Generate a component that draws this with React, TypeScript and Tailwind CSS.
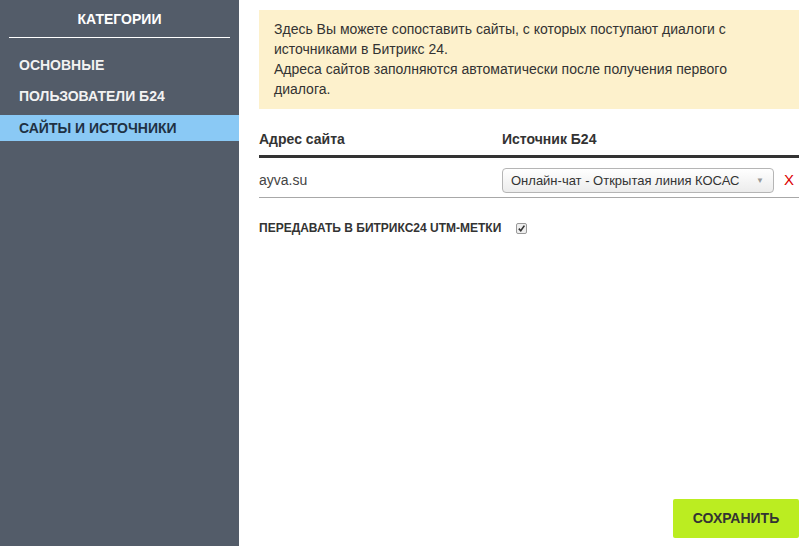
import React from "react";

const menu = [
  { name: "ОСНОВНЫЕ", active: false },
  { name: "ПОЛЬЗОВАТЕЛИ Б24", active: false },
  { name: "САЙТЫ И ИСТОЧНИКИ", active: true },
];

const rows = [{ site: "ayva.su", source: "Онлайн-чат - Открытая линия КОСАС" }];

export default function App() {
  return (
    <div className="flex h-[546px] w-full bg-white font-['Liberation_Sans',Arial,sans-serif] text-[#333]">
      {/* Sidebar */}
      <aside className="w-[239px] shrink-0 bg-[#535c69]">
        <div className="mx-[9px] border-b border-white pt-[10px] pb-[9px] text-center text-[14px] font-bold leading-[18px] text-white">
          КАТЕГОРИИ
        </div>
        <ul className="mt-[14px]">
          {menu.map((item, idx) => (
            <li
              key={idx}
              className={
                item.active
                  ? "mt-[6px] bg-[#8ac9f5] px-[19px] py-[4px] text-[14px] font-bold leading-[18px] text-[#1f3144]"
                  : "mt-[5px] px-[19px] py-[4px] text-[14px] font-bold leading-[18px] text-[#f2f2f2]"
              }
            >
              {item.name}
            </li>
          ))}
        </ul>
      </aside>

      {/* Content */}
      <main className="flex min-w-0 flex-1 flex-col pt-[10px] pr-[4px] pb-[8px] pl-[20px]">
        <div className="bg-[#fdf1cc] px-[15px] pt-[9px] pb-[10px] text-[14px] leading-[20px] text-[#333]">
          Здесь Вы можете сопоставить сайты, с которых поступают диалоги с
          <br />
          источниками в Битрикс 24.
          <br />
          Адреса сайтов заполняются автоматически после получения первого
          <br />
          диалога.
        </div>

        {/* Sites table */}
        <div className="mt-[21px] flex border-b-[3px] border-[#333] pb-[7px] text-[14px] font-bold leading-[18px]">
          <div className="w-[243px]">Адрес сайта</div>
          <div>Источник Б24</div>
        </div>
        {rows.map((row, idx) => (
          <div key={idx} className="flex items-center border-b border-[#a8a8a8] pt-[10px] pb-[4px]">
            <div className="w-[243px] text-[14px] text-[#444]">{row.site}</div>
            <div className="flex h-[25px] w-[272px] items-center justify-between rounded-[4px] border border-[#b5b5b5] bg-gradient-to-b from-white to-[#ececec] pr-[9px] pl-[8px] text-[13px] text-[#333]">
              <span>{row.source}</span>
              <span className="text-[8px] text-[#999]">▼</span>
            </div>
            <div className="ml-[10px] text-[15px] text-[#d00]">X</div>
          </div>
        ))}

        <label className="mt-[21px] flex items-center gap-[15px] text-[12px] font-bold text-[#333]">
          ПЕРЕДАВАТЬ В БИТРИКС24 UTM-МЕТКИ
          <span className="flex h-[11px] w-[11px] items-center justify-center rounded-[2px] border border-[#999] bg-[#eee]">
            <svg viewBox="0 0 10 10" className="h-[9px] w-[9px]">
              <path d="M2 5.2 L4.2 7.5 L8.2 1.8" fill="none" stroke="#333" strokeWidth="1.8" />
            </svg>
          </span>
        </label>

        <div className="mt-auto flex justify-end">
          <button className="h-[39px] w-[126px] rounded-[2px] bg-[#bbed21] text-[14px] font-bold text-[#333]">
            СОХРАНИТЬ
          </button>
        </div>
      </main>
    </div>
  );
}
